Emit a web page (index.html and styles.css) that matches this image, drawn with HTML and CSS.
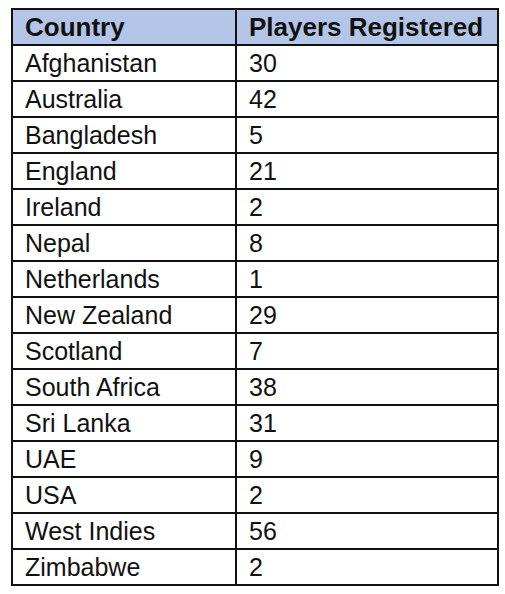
FILE: index.html
```html
<!DOCTYPE html>
<html>
<head>
<meta charset="utf-8">
<link rel="stylesheet" href="styles.css">
</head>
<body>
<table class="players">
  <colgroup><col class="c1"><col class="c2"></colgroup>
  <thead>
    <tr><th>Country</th><th>Players Registered</th></tr>
  </thead>
  <tbody>
    <tr><td>Afghanistan</td><td>30</td></tr>
    <tr><td>Australia</td><td>42</td></tr>
    <tr><td>Bangladesh</td><td>5</td></tr>
    <tr><td>England</td><td>21</td></tr>
    <tr><td>Ireland</td><td>2</td></tr>
    <tr><td>Nepal</td><td>8</td></tr>
    <tr><td>Netherlands</td><td>1</td></tr>
    <tr><td>New Zealand</td><td>29</td></tr>
    <tr><td>Scotland</td><td>7</td></tr>
    <tr><td>South Africa</td><td>38</td></tr>
    <tr><td>Sri Lanka</td><td>31</td></tr>
    <tr><td>UAE</td><td>9</td></tr>
    <tr><td>USA</td><td>2</td></tr>
    <tr><td>West Indies</td><td>56</td></tr>
    <tr><td>Zimbabwe</td><td>2</td></tr>
  </tbody>
</table>
</body>
</html>
```
FILE: styles.css
```css
html, body {
  margin: 0;
  padding: 0;
  background: #ffffff;
}
body {
  padding: 8px 0 0 11px;
  font-family: "Liberation Sans", Arial, sans-serif;
  color: #111111;
}
.players {
  border-collapse: collapse;
  table-layout: fixed;
  width: 486px;
}
.players .c1 { width: 224px; }
.players .c2 { width: 262px; }
.players th,
.players td {
  border: 2px solid #111111;
  height: 34px;
  padding: 0 0 0 12px;
  font-size: 25px;
  line-height: 28px;
  text-align: left;
  vertical-align: middle;
  white-space: nowrap;
}
.players th {
  background: #b4c6e7;
  font-weight: bold;
  font-size: 26px;
}
```
